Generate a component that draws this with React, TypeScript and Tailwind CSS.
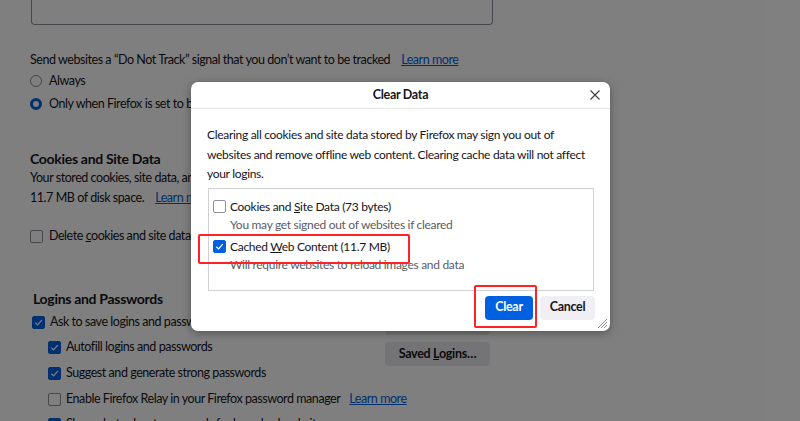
import React from "react";

const font = { fontFamily: 'Lato, "Noto Sans", sans-serif' };

const Check = ({ checked }: { checked?: boolean }) => (
  <span
    className={
      "inline-flex h-[13px] w-[13px] shrink-0 items-center justify-center rounded-[2px] border " +
      (checked ? "border-[#0061e0] bg-[#0061e0]" : "border-[#8f8f9d] bg-white")
    }
  >
    {checked && (
      <svg width="9" height="9" viewBox="0 0 10 10" fill="none">
        <path d="M1.5 5.2 4 7.6 8.6 2.4" stroke="white" strokeWidth="1.4" />
      </svg>
    )}
  </span>
);

const Radio = ({ on }: { on?: boolean }) => (
  <span
    className={
      "inline-block h-[12px] w-[12px] shrink-0 rounded-full " +
      (on ? "border-[3px] border-[#0061e0] bg-white" : "border border-[#8f8f9d] bg-white")
    }
  />
);

const Row = ({ className, children }: { className: string; children: React.ReactNode }) => (
  <div
    className={
      "flex h-[20px] items-center gap-[5px] whitespace-nowrap text-[12.5px] leading-[20px] tracking-[-0.45px] text-[#15141a] " +
      className
    }
  >
    {children}
  </div>
);

const PageButton = ({ children, className }: { children: React.ReactNode; className: string }) => (
  <div
    className={
      "flex h-[24px] w-[105px] items-center justify-center whitespace-nowrap rounded-[4px] bg-[#e9e9ed] text-[12.5px] font-bold text-[#15141a] " +
      className
    }
  >
    {children}
  </div>
);

export default function App() {
  return (
    <div className="relative h-[421px] w-[800px] overflow-hidden bg-white tracking-[-0.3px]" style={font}>
      {/* settings page behind */}
      <div className="pl-[30px]">
        <div className="ml-[1px] h-[25px] w-[462px] rounded-b-[4px] border border-t-0 border-[#8f8f9d]" />
        <Row className="mt-[25px]">
          <span>Send websites a “Do Not Track” signal that you don’t want to be tracked</span>
          <span className="ml-[6px] text-[#0061e0] underline">Learn more</span>
        </Row>
        <Row className="mt-[1px]">
          <Radio />
          <span className="ml-[2px]">Always</span>
        </Row>
        <Row className="mt-[3px]">
          <Radio on />
          <span className="ml-[2px]">Only when Firefox is set to block known trackers</span>
        </Row>
        <div className="mt-[34px] flex h-[20px] items-center text-[14px] font-bold text-[#15141a]">
          Cookies and Site Data
        </div>
        <Row className="">
          <span>Your stored cookies, site data, and cache are currently using</span>
        </Row>
        <Row className="">
          <span>11.7 MB of disk space.</span>
          <span className="ml-[6px] text-[#0061e0] underline">Learn more</span>
        </Row>
        <Row className="mt-[18px]">
          <Check />
          <span className="ml-[1px]">
            Delete <u>c</u>ookies and site data when Firefox is closed
          </span>
        </Row>
        <div className="mt-[42px] flex">
          <div className="w-[355px]">
            <div className="ml-[3px] flex h-[20px] items-center text-[14px] font-bold text-[#15141a]">
              Logins and Passwords
            </div>
            <Row className="mt-[4px] ml-[2px]">
              <Check checked />
              <span>Ask to save logins and passwords for websites</span>
            </Row>
            <Row className="mt-[5px] ml-[18px]">
              <Check checked />
              <span>Autofill logins and passwords</span>
            </Row>
            <Row className="mt-[6px] ml-[18px]">
              <Check checked />
              <span>Suggest and generate strong passwords</span>
            </Row>
            <Row className="mt-[6px] ml-[18px] w-[500px]">
              <Check />
              <span>Enable Firefox Relay in your Firefox password manager</span>
              <span className="ml-[4px] text-[#0061e0] underline">Learn more</span>
            </Row>
            <Row className="mt-[5px] ml-[18px]">
              <Check checked />
              <span>Show alerts about passwords for breached websites</span>
            </Row>
          </div>
          <div className="flex flex-col">
            <PageButton className="mt-[23px]">Exceptions…</PageButton>
            <PageButton className="mt-[7px]">
              <span>
                Saved <u>L</u>ogins…
              </span>
            </PageButton>
          </div>
        </div>
      </div>

      {/* overlay */}
      <div className="absolute inset-0 bg-black/50" />

      {/* dialog */}
      <div className="absolute left-[191px] top-[82px] h-[249px] w-[419px] rounded-[7px] bg-white shadow-[0_2px_8px_rgba(0,0,0,0.35)]">
        <div className="relative flex h-[27px] items-center justify-center border-b border-[#e6e6e6] text-[12.5px] font-bold text-[#15141a]">
          Clear Data
          <svg
            className="absolute left-[399px] top-[8px]"
            width="10"
            height="10"
            viewBox="0 0 10 10"
          >
            <path d="M0.5 0.5 9.5 9.5M9.5 0.5 0.5 9.5" stroke="#3a3a3a" strokeWidth="1.1" />
          </svg>
        </div>
        <div className="mt-[16px] whitespace-nowrap px-[16px] text-[12px] leading-[19.5px] text-[#15141a]">
          <div>Clearing all cookies and site data stored by Firefox may sign you out of</div>
          <div>websites and remove offline web content. Clearing cache data will not affect</div>
          <div>your logins.</div>
        </div>
        <div className="ml-[17px] mt-[4px] h-[103px] w-[386px] whitespace-nowrap border border-[#cfcfd8] pl-[4px] pt-[9px] text-[12px] leading-[18px]">
          <div className="flex h-[18px] items-center gap-[4px] text-[#15141a]">
            <Check />
            <span>
              Cookies and <u>S</u>ite Data (73 bytes)
            </span>
          </div>
          <div className="flex h-[18px] items-center pl-[17px] text-[#5b5b66]">
            You may get signed out of websites if cleared
          </div>
          <div className="mt-[4px] flex h-[18px] items-center gap-[4px] text-[#15141a]">
            <Check checked />
            <span>
              Cached <u>W</u>eb Content (11.7 MB)
            </span>
          </div>
          <div className="flex h-[18px] items-center pl-[17px] text-[#5b5b66]">
            Will require websites to reload images and data
          </div>
        </div>
        <div className="mt-[5px] flex justify-end gap-[7px] pr-[15px]">
          <div className="flex h-[24px] w-[48px] items-center justify-center rounded-[4px] bg-[#0061e0] text-[12.5px] font-bold text-white">
            Clear
          </div>
          <div className="flex h-[24px] w-[55px] items-center justify-center rounded-[4px] bg-[#f0f0f4] text-[12.5px] font-bold text-[#15141a]">
            Cancel
          </div>
        </div>
        {/* resize grip */}
        <svg className="absolute bottom-[2px] right-[2px]" width="11" height="11" viewBox="0 0 11 11">
          <path d="M10 1 1 10M10 4 4 10M10 7 7 10" stroke="#8a8a8a" strokeWidth="1" />
        </svg>
        {/* red annotation boxes */}
        <div className="absolute left-[7px] top-[152px] h-[30px] w-[212px] rounded-[2px] border-2 border-[#ff2222]" />
        <div className="absolute left-[283px] top-[203px] h-[43px] w-[63px] rounded-[2px] border-2 border-[#ff2222]" />
      </div>
    </div>
  );
}
